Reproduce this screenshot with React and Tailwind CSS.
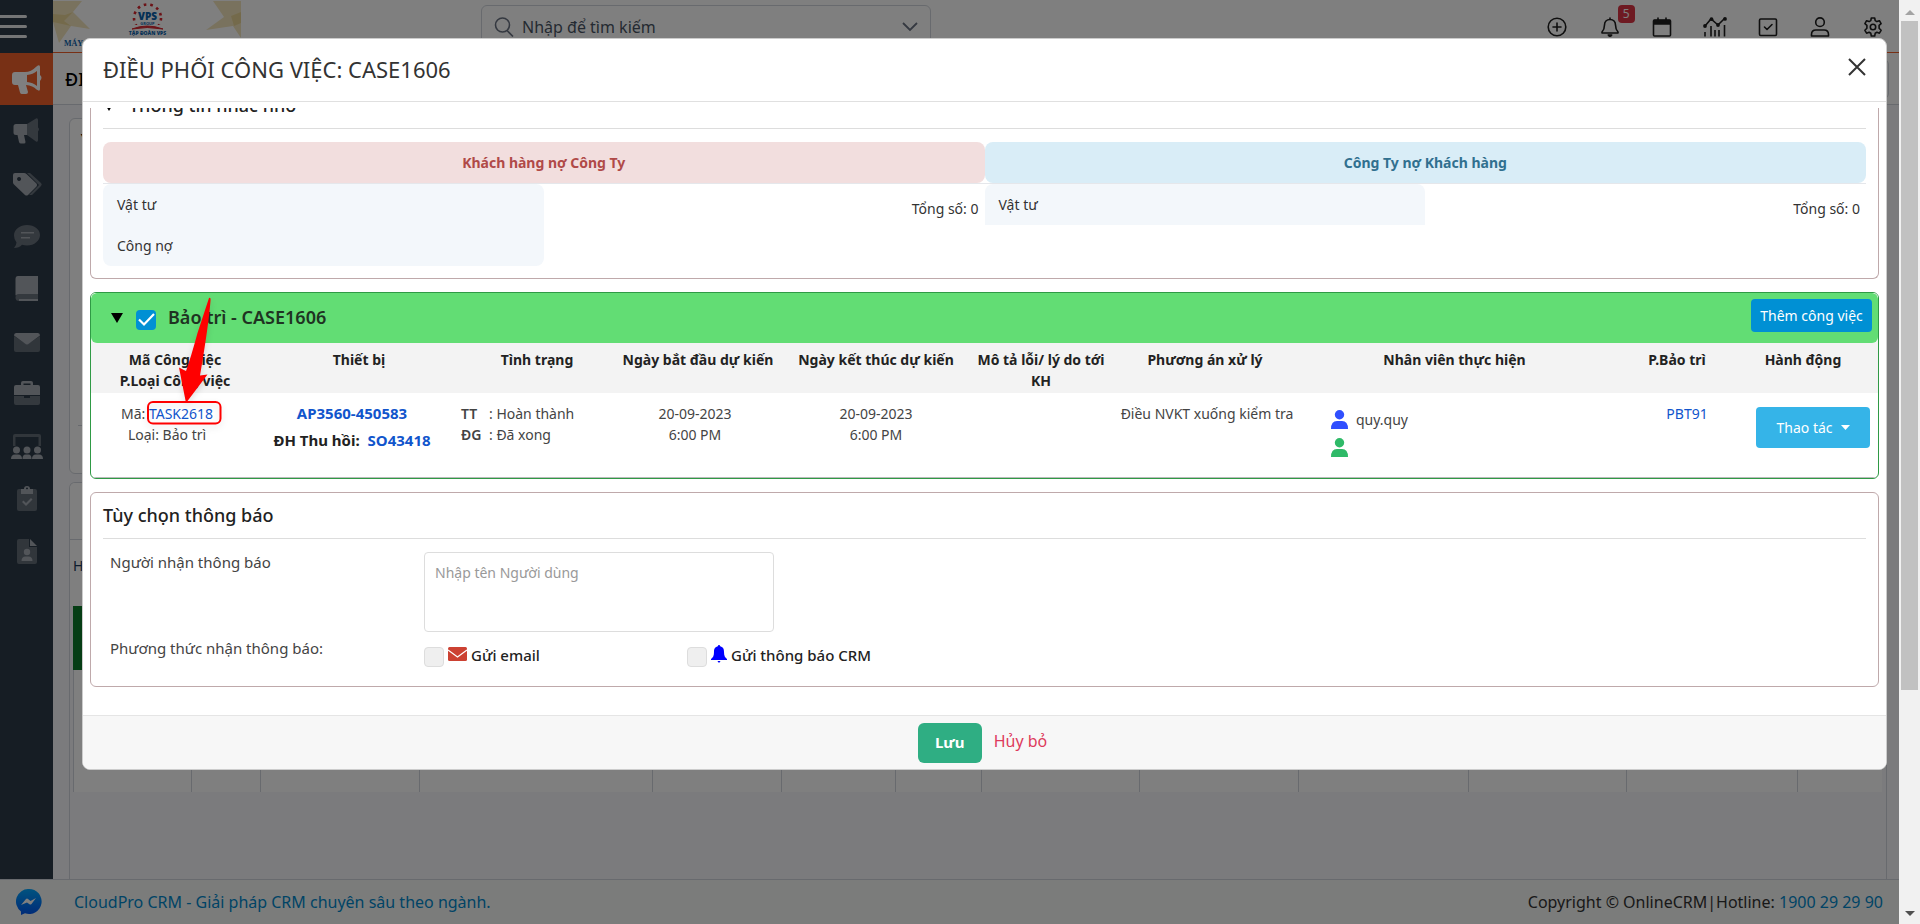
import { useState } from "react";

/* ---------- icons ---------- */

function SideIcon({ children }) {
  return (
    <svg className="h-8 w-8 text-[#a4aab2]" viewBox="0 0 32 32" fill="currentColor">
      {children}
    </svg>
  );
}

const sideItems = [
  {
    name: "Chiến dịch",
    icon: (
      <SideIcon>
        <path opacity=".5" d="M16 9 25 3.500Q27 2.800 27 5v7.500q2 1.500 0 4V25q0 2.500-2 1.500L16 20z" />
        <path d="M5 9h11v11h-3l1.500 7q0 1.500-1.500 1.500h-3Q8.500 28.500 8 27L6.500 20H5q-2.500 0-2.500-2.500v-6Q2.500 9 5 9z" />
      </SideIcon>
    ),
  },
  {
    name: "Nhãn",
    icon: (
      <SideIcon>
        <path opacity=".5" d="M16 5h3l11 10q1.500 1.500 0 3L21 27h-3l10-10z" />
        <path fillRule="evenodd" d="M4 5h9q1.500 0 2.500 1l10 9.500q1.300 1.500 0 3L17 27q-1.500 1.200-3 0L3 16.500q-1-1-1-2V7q0-2 2-2zm4 4a2 2 0 1 0 .1 0z" />
      </SideIcon>
    ),
  },
  {
    name: "Phản hồi",
    icon: (
      <SideIcon>
        <path opacity=".5" d="M16 5c7.500 0 13 4.500 13 10s-5.500 10.500-13 10.500q-2.500 0-5-.8Q8 28 3 28q2.500-3 2.500-5.500Q3 19.500 3 15.500C3 9.500 9 5 16 5z" />
        <path d="M10 12h13v1.500H10zM10 17h9v1.500h-9z" />
      </SideIcon>
    ),
  },
  {
    name: "Sổ tay",
    icon: (
      <SideIcon>
        <path d="M7 3h20v18H8q-2 0-3.500 1.500V6Q4.500 3 7 3z" />
        <path opacity=".5" d="M8 21h19v7H8q-3.500 0-3.500-3.500T8 21z" />
        <path d="M8 26h19v2H8z" />
      </SideIcon>
    ),
  },
  {
    name: "Thư",
    icon: (
      <SideIcon>
        <path opacity=".45" d="M3 10l12 8q1 .7 2 0l12-8v14q0 2-2 2H5q-2 0-2-2z" />
        <path d="M5 7h22q2 0 2 2.500L17.500 18q-1.500 1-3 0L3 9.500Q3 7 5 7z" />
      </SideIcon>
    ),
  },
  {
    name: "Công việc",
    icon: (
      <SideIcon>
        <path fillRule="evenodd" d="M10 7V5q0-2 2-2h8q2 0 2 2v2h5q2 0 2 2v8H3V9q0-2 2-2zm2.500 0h7V5.500h-7z" />
        <path opacity=".5" d="M3 18h10v2h6v-2h10v7q0 2-2 2H5q-2 0-2-2z" />
      </SideIcon>
    ),
  },
  {
    name: "Nhóm",
    icon: (
      <SideIcon>
        <path opacity=".45" d="M4 3h24q2 0 2 2v10h-2.500V6h-23v9H2V5q0-2 2-2z" />
        <circle cx="5.500" cy="19" r="3.500" />
        <circle cx="16" cy="19" r="3.500" />
        <circle cx="26.500" cy="19" r="3.500" />
        <path d="M0 28q0-4.500 4-4.500h3q4 0 4 4.500zM11.500 28q0-4.500 3-4.500h3q3 0 3 4.500zM21 28q0-4.500 4-4.500h3q4 0 4 4.500z" />
      </SideIcon>
    ),
  },
  {
    name: "Kiểm tra",
    icon: (
      <SideIcon>
        <path opacity=".45" d="M8 6h16q2 0 2 2v18q0 2-2 2H8q-2 0-2-2V8q0-2 2-2z" />
        <path fillRule="evenodd" d="M10 6h3a3 3 0 0 1 6 0h3v5H10zm5-.500a1 1 0 1 0 2 0 1 1 0 0 0-2 0z" />
        <path d="m11 19 1.500-1.500 2.500 2.500 5-5 1.500 1.500L15 23z" />
      </SideIcon>
    ),
  },
  {
    name: "Hồ sơ",
    icon: (
      <SideIcon>
        <path opacity=".45" d="M8 3h10v8h8v15q0 2-2 2H8q-2 0-2-2V5q0-2 2-2z" />
        <path d="M19 3l7 7h-7z" />
        <circle cx="16" cy="16" r="3.200" />
        <path d="M10.500 25q0-4.500 4-4.500h3q4 0 4 4.500z" />
      </SideIcon>
    ),
  },
];

function TopIcon({ children }) {
  return (
    <svg className="h-5 w-5" viewBox="0 0 20 20" fill="none" stroke="currentColor" strokeWidth="1.600" strokeLinecap="round" strokeLinejoin="round">
      {children}
    </svg>
  );
}

const topItems = [
  { name: "Thêm", icon: <TopIcon><circle cx="10" cy="10" r="8.800" /><path d="M10 6v8M6 10h8" /></TopIcon> },
  {
    name: "Thông báo",
    badge: 5,
    icon: <TopIcon><path d="M10 1v1.500M10 2.500c-3.500 0-5.500 2.500-5.500 5.500 0 4-1.200 5.500-2.500 7v1h16v-1c-1.300-1.500-2.500-3-2.500-7 0-3-2-5.500-5.500-5.500z" /><path fill="currentColor" d="M8.300 18h3.400q-1.700 2.400-3.400 0z" /></TopIcon>,
  },
  {
    name: "Lịch",
    icon: <TopIcon><path d="M2.500 3h15q1 0 1 1v14q0 1-1 1h-15q-1 0-1-1V4q0-1 1-1zM6 1v2M14 1v2" /><path fill="currentColor" d="M2 3.500h16V7H2z" /></TopIcon>,
  },
  {
    name: "Báo cáo",
    icon: (
      <svg className="h-5 w-6" viewBox="0 0 24 20" fill="none" stroke="currentColor" strokeWidth="1.600">
        <path d="M2 9 8 2l7 6 7-7M2 19.500V15M8 19.500V9M12 19.500V13M16 19.500V13M21.500 19.500V8" />
        <g fill="currentColor" stroke="none"><circle cx="2" cy="9" r="1.900" /><circle cx="8.500" cy="2.200" r="1.900" /><circle cx="15" cy="8" r="1.900" /><circle cx="22" cy="1.900" r="1.900" /></g>
      </svg>
    ),
  },
  { name: "Việc cần làm", icon: <TopIcon><rect x="1.500" y="2" width="17" height="16.500" rx="1.200" /><path d="m6.500 10 2.500 2.500 5-5" /></TopIcon> },
  { name: "Tài khoản", icon: <TopIcon><circle cx="10" cy="5.200" r="4.300" /><path d="M1.500 19v-1.500q0-4.500 4.500-4.500h8q4.500 0 4.500 4.500V19z" /></TopIcon> },
  {
    name: "Cài đặt",
    icon: (
      <TopIcon>
        <circle cx="10" cy="10" r="2.700" />
        <path d="M8.300 1h3.400l.5 2.600 1.700 1 2.500-.9 1.700 2.900-2 1.800v2.900l2 2-1.700 2.900-2.500-.9-1.700 1-.5 2.700H8.300l-.5-2.700-1.700-1-2.500.9-1.700-2.900 2-2V8.400l-2-1.800 1.700-2.900 2.500.9 1.700-1z" />
      </TopIcon>
    ),
  },
];

function Logo() {
  return (
    <svg className="h-[52px] w-[188px]" viewBox="0 0 188 52">
      <rect width="188" height="52" fill="#fff" />
      <g fill="#f3e5bd">
        <path d="M0 1h29l-9 11 17 17-19-3L6 43 0 22z" />
        <path d="M160 1h28v37l-8-12-27 4 18-13z" />
      </g>
      <path d="M0 14l12 1 8-3-9 9 7 5L0 22z" fill="#e9d596" />
      <path d="M188 12l-10 4 3 10 7-3z" fill="#e9d596" />
      <circle cx="94.500" cy="18" r="13.500" fill="none" stroke="#d8262f" strokeWidth="2.600" strokeDasharray="2.600 4" />
      <rect x="78" y="25" width="34" height="12" fill="#fff" />
      <text x="94.500" y="20" textAnchor="middle" fontFamily="Open Sans" fontWeight="800" fontSize="10" fill="#0b62ab">VPS</text>
      <text x="94.500" y="24.500" textAnchor="middle" fontFamily="Open Sans" fontWeight="700" fontSize="4" fill="#0b62ab">GROUP</text>
      <path d="M79 29q15-6 31 0-16-3-31 0z" fill="#d8262f" stroke="#d8262f" />
      <text x="94.500" y="35" textAnchor="middle" fontFamily="Open Sans" fontWeight="800" fontSize="5" fill="#0b62ab">TẬP ĐOÀN VPS</text>
      <text x="11" y="46" fontFamily="Liberation Serif" fontWeight="700" fontSize="8" fill="#0b62ab">MÁY LỌC NƯỚC</text>
    </svg>
  );
}

function MessengerIcon() {
  return (
    <svg className="h-[26px] w-[26px]" viewBox="0 0 26 26">
      <defs>
        <linearGradient id="msg" x1="0" y1="0" x2="0" y2="1">
          <stop offset="0" stopColor="#00a6ff" />
          <stop offset="1" stopColor="#0055f0" />
        </linearGradient>
      </defs>
      <path d="M13 0a12.500 12.500 0 1 1-4 24.300L5 26v-3.500A12.500 12.500 0 0 1 13 0z" fill="url(#msg)" />
      <path d="m5 16 5-6q1-1 2 0l2.500 2L20 9l-4.500 6q-1 1-2 .2L11 13.500z" fill="#fff" />
    </svg>
  );
}

function PersonSolid({ className }) {
  return (
    <svg className={className} viewBox="0 0 17 19" fill="currentColor">
      <circle cx="8.500" cy="4.700" r="4.700" />
      <path d="M0 19q0-8 6-8h5q6 0 6 8z" />
    </svg>
  );
}

/* ---------- page behind the dialog ---------- */

function Sidebar() {
  return (
    <nav className="flex w-[53px] shrink-0 flex-col bg-[#2d3a48]">
      <button aria-label="Menu" className="flex h-[53px] flex-col justify-center gap-[7px]">
        <span className="h-[3px] w-[27px] rounded-r bg-[#e8eaec]" />
        <span className="h-[3px] w-[27px] rounded-r bg-[#e8eaec]" />
        <span className="h-[3px] w-[27px] rounded-r bg-[#e8eaec]" />
      </button>
      <a href="#marketing" aria-label="Marketing" className="flex h-[52px] items-center justify-center bg-[#f0602a] text-white">
        <svg className="h-8 w-8" viewBox="0 0 32 32" fill="currentColor">
          <path fillRule="evenodd" d="M4 9h10q6 0 11.500-5.500Q29 1 29 4v8q3 2.500 0 6v8q0 3-3.500.5Q22 22.500 15 22l2 7q0 2-2 2h-4q-1.500 0-2-1.500L7 22H4q-3 0-3-3v-7q0-3 3-3zm12 3v7q6 .500 10 4V8q-4 3.500-10 4z" />
        </svg>
      </a>
      <div className="flex h-[473px] flex-col">
        {sideItems.map((item) => (
          <a key={item.name} href="#module" aria-label={item.name} className="flex flex-1 items-center justify-center">
            {item.icon}
          </a>
        ))}
      </div>
    </nav>
  );
}

function TopBar() {
  return (
    <header className="flex h-[53px] shrink-0 items-center border-b border-[#f0602a] bg-white">
      <Logo />
      <div className="mt-0.5 ml-60 flex h-11 w-[450px] items-center gap-2 rounded-md border border-gray-300 px-3">
        <svg className="h-5 w-5 shrink-0 text-gray-500" viewBox="0 0 20 20" fill="none" stroke="currentColor" strokeWidth="1.600">
          <circle cx="8.500" cy="8" r="7" />
          <path d="m13 13.500 6 6" />
        </svg>
        <input aria-label="Tìm kiếm" placeholder="Nhập để tìm kiếm" className="min-w-0 flex-1 text-base outline-none placeholder:text-gray-600" />
        <svg className="h-4 w-4 text-gray-500" viewBox="0 0 16 16" fill="none" stroke="currentColor" strokeWidth="1.800">
          <path d="m1 4 7 7 7-7" />
        </svg>
      </div>
      <div className="mt-0.5 ml-auto grid w-[368px] grid-cols-7 text-[#1f1f1f]">
        {topItems.map((item) => (
          <button key={item.name} aria-label={item.name} className="relative flex justify-center">
            {item.icon}
            {item.badge && (
              <span className="absolute -top-3 left-[34px] h-[18px] w-[17px] rounded bg-[#dc3545] text-center text-xs leading-[18px] text-white">
                {item.badge}
              </span>
            )}
          </button>
        ))}
      </div>
    </header>
  );
}

const gridCols = "grid-cols-[118px_69px_159px_233px_129px_114px_86px_158px_159px_170px_158px_171px_1fr]";

function BackgroundPage() {
  return (
    <main className="flex min-h-0 flex-1 flex-col">
      <div className="flex h-[52px] shrink-0 items-center justify-between border-b border-gray-300 bg-white pr-2.5 pl-3">
        <h1 className="text-lg font-medium">ĐIỀU PHỐI</h1>
        <div className="h-[38px] w-24 rounded border border-gray-300" />
      </div>
      <div className="flex min-h-0 flex-1 flex-col pt-[13px] pr-3 pl-4">
        <section className="h-[356px] shrink-0 rounded-md border border-gray-300 bg-white px-2 pt-2">
          <div className="h-[299px] border-b border-gray-300 text-sm">▼</div>
        </section>
        <section className="mt-2 flex-1 overflow-hidden rounded-t-md border border-b-0 border-gray-300">
          <div className="h-[57px] border-b border-gray-300 bg-white" />
          <div className="h-[66px] bg-white px-[3px] pt-4 text-sm text-[#1b3a5c]">Hiển thị</div>
          <div className="mr-1 ml-[3px] h-16 bg-[#0a7a28]" />
          <div className={`mr-1 ml-[3px] grid h-[122px] bg-white ${gridCols}`}>
            {Array.from({ length: 13 }, (_, i) => (
              <div key={i} className="border-l border-gray-300" />
            ))}
          </div>
        </section>
      </div>
    </main>
  );
}

function PageFooter() {
  return (
    <footer className="flex h-[45px] shrink-0 items-center justify-between border-t border-gray-300 bg-[#f6f8f6] pr-4 pl-4 text-base">
      <div className="flex items-center gap-8">
        <MessengerIcon />
        <a href="#cloudpro" className="text-[#0088cc]">CloudPro CRM - Giải pháp CRM chuyên sâu theo ngành.</a>
      </div>
      <p className="text-[#333]">
        Copyright © OnlineCRM|Hotline: <a href="#hotline" className="text-[#0088cc]">1900 29 29 90</a>
      </p>
    </footer>
  );
}

/* ---------- dialog ---------- */

function Caret({ className }) {
  return (
    <svg className={className} viewBox="0 0 12 10"><path d="M0 0h12L6 10z" /></svg>
  );
}

function DebtColumn({ title, headClass, rows, rowsClass }) {
  return (
    <div>
      <h3 className={`h-[41px] rounded-lg text-center text-sm leading-[41px] font-bold ${headClass}`}>{title}</h3>
      <div className="flex justify-between border-t border-gray-200">
        <ul className={`w-1/2 bg-[#f3f7fb] ${rowsClass}`}>
          {rows.map((row) => (
            <li key={row} className="h-[41px] px-3.5 leading-[41px]">{row}</li>
          ))}
        </ul>
        <p className="pt-3.5 pr-1.5">Tổng số: 0</p>
      </div>
    </div>
  );
}

function Pointer() {
  return (
    <svg className="pointer-events-none absolute -top-[113px] -left-2.5 h-[146px] w-[94px] max-w-none drop-shadow-md" viewBox="140 290 94 146">
      <path d="M210 298q2-1 1.500 3-2 25-10.500 74.500l7.500-1L187 403l-7-35.500 7 3.500q5-14 11.500-38z" fill="#f00" />
      <rect x="149" y="402" width="72.500" height="21.500" rx="5" fill="none" stroke="#f00" strokeWidth="2" />
    </svg>
  );
}

function TaskTable() {
  return (
    <table className="w-full table-fixed text-center">
      <colgroup>
        <col className="w-[172px]" />
        <col className="w-[192px]" />
        <col className="w-[164px]" />
        <col className="w-[158px]" />
        <col className="w-[198px]" />
        <col className="w-[132px]" />
        <col className="w-[196px]" />
        <col />
        <col className="w-[142px]" />
        <col className="w-[130px]" />
      </colgroup>
      <thead>
        <tr className="h-[50px] bg-[#f3f3f3] align-top whitespace-nowrap text-[#222]">
          <th className="pt-1.5 pr-1">Mã Công việc<br />P.Loại Công việc</th>
          <th className="pt-1.5">Thiết bị</th>
          <th className="pt-1.5">Tình trạng</th>
          <th className="pt-1.5">Ngày bắt đầu dự kiến</th>
          <th className="pt-1.5">Ngày kết thúc dự kiến</th>
          <th className="pt-1.5">Mô tả lỗi/ lý do tới<br />KH</th>
          <th className="pt-1.5">Phương án xử lý</th>
          <th className="pt-1.5">Nhân viên thực hiện</th>
          <th className="pt-1.5">P.Bảo trì</th>
          <th className="pt-1.5 pr-5">Hành động</th>
        </tr>
      </thead>
      <tbody>
        <tr className="h-[84px] align-top">
          <td className="pt-2.5 pr-5">
            Mã:{" "}
            <span className="relative inline-block">
              <a href="#task" className="text-[#1155cc]">TASK2618</a>
              <Pointer />
            </span>
            <p>Loại: Bảo trì</p>
          </td>
          <td className="pt-2.5 pr-3.5 text-[15px] font-bold whitespace-nowrap text-[#222]">
            <a href="#device" className="text-[#1155cc]">AP3560-450583</a>
            <p className="mt-1.5">ĐH Thu hồi: <a href="#order" className="ml-1 text-[#1155cc]">SO43418</a></p>
          </td>
          <td className="pt-2.5 pl-1.5 text-left">
            <dl className="grid grid-cols-[28px_1fr]">
              <dt className="font-semibold">TT</dt><dd>: Hoàn thành</dd>
              <dt className="font-semibold">ĐG</dt><dd>: Đã xong</dd>
            </dl>
          </td>
          <td className="pt-2.5 pr-1.5">20-09-2023<br />6:00 PM</td>
          <td className="pt-2.5">20-09-2023<br />6:00 PM</td>
          <td />
          <td className="pt-2.5 pl-1">Điều NVKT xuống kiểm tra</td>
          <td className="pt-4 pl-7 text-left">
            <div className="flex items-center gap-2">
              <PersonSolid className="h-[19px] w-[17px] text-[#304ffe]" />
              <span>quy.quy</span>
            </div>
            <PersonSolid className="mt-2 h-[19px] w-[17px] text-[#2fba68]" />
          </td>
          <td className="pt-2.5 pl-5"><a href="#maintenance" className="text-[#1155cc]">PBT91</a></td>
          <td className="pt-3.5">
            <button className="inline-flex h-[41px] w-[114px] items-center justify-center gap-2 rounded bg-[#35b4e8] text-white">
              Thao tác
              <svg className="h-[5px] w-[9px]" viewBox="0 0 9 5" fill="currentColor"><path d="M0 0h9L4.500 5z" /></svg>
            </button>
          </td>
        </tr>
      </tbody>
    </table>
  );
}

function NotifyOptions() {
  return (
    <section className="mt-[13px] rounded-md border border-[#bfa9ab] px-3 pb-[19px]">
      <h2 className="h-[45px] text-lg leading-[45px] font-medium text-[#222]">Tùy chọn thông báo</h2>
      <div className="grid grid-cols-[314px_1fr] gap-y-1.5 border-t border-[#ddd] pt-[13px] pl-[7px] text-[15px]">
        <label htmlFor="receivers">Người nhận thông báo</label>
        <textarea
          id="receivers"
          placeholder="Nhập tên Người dùng"
          className="h-20 w-[350px] resize-none rounded border border-[#ddd] px-2.5 py-2.5 text-sm outline-none placeholder:text-[#999]"
        />
        <span>Phương thức nhận thông báo:</span>
        <div className="flex pt-[7px] text-[#222]">
          <label className="flex w-[263px] items-start gap-1 font-medium">
            <input type="checkbox" className="mt-0.5 h-5 w-5 appearance-none rounded border border-[#ddd] bg-[#efefef]" />
            <svg className="mt-0.5 h-3.5 w-[19px]" viewBox="0 0 19 14">
              <rect width="19" height="14" rx="1.500" fill="#cc4132" />
              <path d="m0 3 9.500 7L19 3" fill="none" stroke="#fff" strokeWidth="1.200" />
            </svg>
            Gửi email
          </label>
          <label className="flex items-start gap-1 font-medium">
            <input type="checkbox" className="mt-0.5 h-5 w-5 appearance-none rounded border border-[#ddd] bg-[#efefef]" />
            <svg className="h-[18px] w-4" viewBox="0 0 16 18" fill="#00f">
              <path d="M8 0q1 0 1.200 1.200C12.500 2 13 4.500 13 7c0 4 1 5.500 3 7v1H0v-1c2-1.500 3-3 3-7 0-2.500.5-5 3.800-5.800Q7 0 8 0zM6.500 16h3Q8 19.500 6.500 16z" />
            </svg>
            Gửi thông báo CRM
          </label>
        </div>
      </div>
    </section>
  );
}

function DispatchDialog() {
  const [checked, setChecked] = useState(true);

  return (
    <div role="dialog" aria-label="Điều phối công việc" className="overflow-hidden rounded-lg border border-[#ccc] bg-white text-sm leading-[21px] text-[#444]">
      <div className="flex h-[63px] items-center justify-between border-b border-[#e0e0e0] px-5 pb-0.5">
        <h1 className="text-[22px] text-[#333]">ĐIỀU PHỐI CÔNG VIỆC: CASE1606</h1>
        <button aria-label="Đóng" className="mb-1">
          <svg className="h-[18px] w-[18px]" viewBox="0 0 18 18" fill="none" stroke="#333" strokeWidth="2">
            <path d="m1 1 16 16M17 1 1 17" />
          </svg>
        </button>
      </div>

      <div className="mt-1.5 overflow-hidden px-[7px] pb-7">
        <section className="-mt-[15px] rounded-md border border-t-0 border-[#bfa9ab] px-3 pb-3">
          <h2 className="flex h-9 gap-3.5 border-b border-[#ddd] text-lg leading-6 font-medium text-[#222]">
            <Caret className="mt-2 h-2.5 w-3" />
            Thông tin nhắc nhở
          </h2>
          <div className="mt-[13px] grid grid-cols-2 text-[#333]">
            <DebtColumn title="Khách hàng nợ Công Ty" headClass="bg-[#f2dede] text-[#b04a48]" rows={["Vật tư", "Công nợ"]} rowsClass="rounded-lg" />
            <DebtColumn title="Công Ty nợ Khách hàng" headClass="bg-[#d9edf7] text-[#31708f]" rows={["Vật tư"]} rowsClass="self-start rounded-t-lg" />
          </div>
        </section>

        <section className="mt-[13px] overflow-hidden rounded-md border border-[#2f9a45]">
          <div className="bg-[#f3f3f3]">
            <div className="flex h-[50px] items-start rounded-md bg-[#62dd74] pr-1.5 pl-5">
              <Caret className="mt-5 h-2.5 w-3" />
              <label className="ml-[13px] flex items-start gap-3 pt-3.5 text-lg leading-[21px] font-semibold text-[#1f3322]">
                <span className="relative mt-[3px] h-5 w-5">
                  <input
                    type="checkbox"
                    checked={checked}
                    onChange={(e) => setChecked(e.target.checked)}
                    className="block h-5 w-5 appearance-none rounded bg-white checked:bg-[#0090d4]"
                  />
                  {checked && (
                    <svg className="pointer-events-none absolute inset-0 h-5 w-5" viewBox="0 0 20 20" fill="none" stroke="#fff" strokeWidth="2.200">
                      <path d="m3 9.500 5 5L18 4" />
                    </svg>
                  )}
                </span>
                Bảo trì - CASE1606
              </label>
              <button className="mt-1.5 ml-auto h-[33px] w-[121px] rounded bg-[#0090d4] text-white">Thêm công việc</button>
            </div>
          </div>
          <TaskTable />
          <div className="border-t border-[#bbb]" />
        </section>

        <NotifyOptions />
      </div>

      <div className="flex h-[54px] items-center justify-center gap-3 border-t border-[#e5e5e5] bg-[#f7f7f7] pr-1">
        <button className="h-10 w-16 rounded-md bg-[#2fae83] text-[15px] font-bold text-white">Lưu</button>
        <a href="#cancel" className="mb-1 text-base text-[#de3b5c]">Hủy bỏ</a>
      </div>
    </div>
  );
}

function ScrollRail() {
  return (
    <div className="flex w-[21px] shrink-0 flex-col items-center bg-[#f1f1f1]">
      <svg className="mt-2.5 h-[5px] w-2.5" viewBox="0 0 10 5" fill="#a3a3a3"><path d="M0 5h10L5 0z" /></svg>
      <div className="mt-1.5 h-[669px] w-[17px] bg-[#c1c1c1]" />
      <svg className="mt-auto mb-2 h-[5px] w-2.5" viewBox="0 0 10 5" fill="#505050"><path d="M0 0h10L5 5z" /></svg>
    </div>
  );
}

export default function App() {
  return (
    <div className="flex h-screen overflow-hidden font-['Noto_Sans','Open_Sans',sans-serif]">
      <div className="relative flex min-w-0 flex-1 flex-col bg-[#f6f7fb]">
        <div className="flex min-h-0 flex-1">
          <Sidebar />
          <div className="flex min-w-0 flex-1 flex-col">
            <TopBar />
            <BackgroundPage />
          </div>
        </div>
        <PageFooter />

        <div className="absolute inset-0 bg-black/50 pt-[38px] pr-3 pl-[82px]">
          <DispatchDialog />
        </div>
      </div>
      <ScrollRail />
    </div>
  );
}
